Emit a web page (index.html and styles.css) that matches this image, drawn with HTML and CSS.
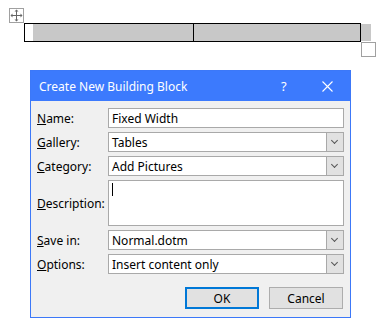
FILE: index.html
```html
<!DOCTYPE html>
<html lang="en">
<head>
    <meta charset="UTF-8">
    <meta name="viewport" content="width=device-width, initial-scale=1.0">
    <title>Create New Building Block</title>
    <link rel="stylesheet" href="styles.css">
</head>
<body>
    <div class="doc">
        <div class="move-handle">
            <svg width="13" height="13" viewBox="0 0 13 13">
                <path d="M6.5 1.5v10M1.5 6.5h10" stroke="#666" stroke-width="1"/>
                <path d="M6.5 0.5l-2 2h4zM6.5 12.5l-2-2h4zM0.5 6.5l2-2v4zM12.5 6.5l-2-2v4z" fill="#666"/>
            </svg>
        </div>
        <div class="tbl">
            <div class="cell cell-first"><span class="cell-gap"></span></div>
            <div class="cell"></div>
            <span class="row-end"></span>
            <span class="resize-handle"></span>
        </div>
    </div>

    <div class="dialog">
        <div class="titlebar">
            <span class="title">Create New Building Block</span>
            <span class="help">?</span>
            <span class="close">
                <svg width="11" height="11" viewBox="0 0 11 11">
                    <path d="M0.5 0.5l10 10M10.5 0.5l-10 10" stroke="#fff" stroke-width="1.1"/>
                </svg>
            </span>
        </div>
        <div class="body">
            <form class="fields">
                <label><u>N</u>ame:</label>
                <div class="field">Fixed Width</div>

                <label><u>G</u>allery:</label>
                <div class="field select">Tables<span class="drop"></span></div>

                <label><u>C</u>ategory:</label>
                <div class="field select">Add Pictures<span class="drop"></span></div>

                <label><u>D</u>escription:</label>
                <div class="field area"><span class="caret"></span></div>

                <label><u>S</u>ave in:</label>
                <div class="field select">Normal.dotm<span class="drop"></span></div>

                <label><u>O</u>ptions:</label>
                <div class="field select">Insert content only<span class="drop"></span></div>
            </form>
            <div class="buttons">
                <button type="button" class="btn btn-default">OK</button>
                <button type="button" class="btn">Cancel</button>
            </div>
        </div>
    </div>
</body>
</html>
```

FILE: styles.css
```css
body {
    margin: 0;
    background-color: #fff;
    font-family: "Segoe UI", "Noto Sans", Arial, sans-serif;
    font-size: 12px;
    color: #000;
}
.doc {
    position: relative;
    height: 70px;
    padding: 23px 0 0 24px;
    box-sizing: border-box;
}
.move-handle {
    position: absolute;
    left: 9px;
    top: 8px;
    width: 15px;
    height: 15px;
    box-sizing: border-box;
    border: 1px solid #a0a0a0;
    display: flex;
    align-items: center;
    justify-content: center;
}
.tbl {
    position: relative;
    width: 337px;
    height: 19px;
    box-sizing: border-box;
    border: 1px solid #000;
    display: flex;
    background-color: #c8c8c8;
}
.cell {
    flex: 1;
}
.cell-first {
    flex: 0 0 168px;
    border-right: 1px solid #000;
    display: flex;
}
.cell-gap {
    width: 8px;
    background-color: #fff;
}
.row-end {
    position: absolute;
    left: 336px;
    top: 0;
    width: 10px;
    height: 17px;
    background-color: #c8c8c8;
}
.resize-handle {
    position: absolute;
    left: 336px;
    top: 18px;
    width: 15px;
    height: 15px;
    box-sizing: border-box;
    border: 1px solid #a0a0a0;
    background-color: #fff;
}
.dialog {
    margin-left: 30px;
    width: 321px;
    height: 248px;
    box-sizing: border-box;
    border: 1px solid #3c78f8;
    background-color: #f0f0f0;
}
.titlebar {
    height: 30px;
    background-color: #3c7afd;
    color: #fff;
    display: flex;
    align-items: center;
    padding-left: 8px;
    font-size: 12px;
}
.title {
    flex: 1;
}
.help {
    width: 12px;
    margin-right: 29px;
    font-size: 13px;
}
.close {
    width: 12px;
    margin-right: 16px;
    display: flex;
}
.body {
    padding: 7px 6px 0 6px;
}
.fields {
    display: grid;
    grid-template-columns: 71px 236px;
    grid-template-rows: 20px 20px 20px 46px 20px 20px;
    row-gap: 4px;
    margin: 0;
}
label {
    display: flex;
    align-items: center;
    color: #000;
}
.field {
    position: relative;
    box-sizing: border-box;
    border: 1px solid #a9a9a9;
    background-color: #fff;
    padding-left: 3px;
    display: flex;
    align-items: center;
}
.drop {
    position: absolute;
    right: 0;
    top: 0;
    width: 17px;
    height: 18px;
    box-sizing: border-box;
    border-left: 1px solid #a9a9a9;
    background-color: #e1e1e1;
}
.drop::after {
    content: "";
    position: absolute;
    left: 5px;
    top: 5px;
    width: 4px;
    height: 4px;
    border-right: 1px solid #555;
    border-bottom: 1px solid #555;
    transform: rotate(45deg);
}
.area {
    align-items: flex-start;
}
.caret {
    margin-top: 2px;
    width: 1px;
    height: 13px;
    background-color: #000;
}
.buttons {
    display: flex;
    justify-content: flex-end;
    gap: 10px;
    margin-top: 13px;
    padding-right: 1px;
}
.btn {
    width: 74px;
    height: 22px;
    box-sizing: border-box;
    border: 1px solid #adadad;
    background-color: #e1e1e1;
    font-family: inherit;
    font-size: 12px;
    color: #000;
    padding: 0;
}
.btn-default {
    border: 2px solid #0078d7;
}
```
